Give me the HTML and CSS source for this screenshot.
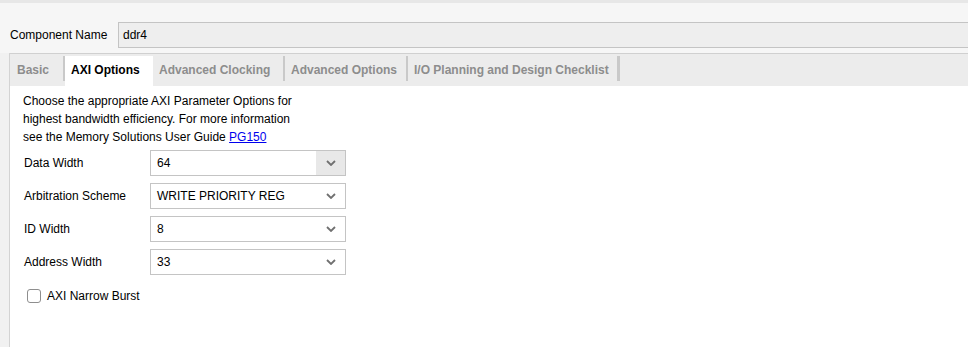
FILE: index.html
```html
<!DOCTYPE html>
<html>
<head>
<meta charset="utf-8">
<link rel="stylesheet" href="styles.css">
</head>
<body>
<div class="topband"></div>
<div class="header">
  <span class="name-label">Component Name</span>
  <div class="name-input">ddr4</div>
</div>
<div class="tabs-wrap">
  <div class="tabstrip">
    <div class="tab t-basic">Basic</div><span class="sep"></span>
    <div class="tab t-axi active">AXI Options</div>
    <div class="tab t-clock">Advanced Clocking</div><span class="sep"></span>
    <div class="tab t-adv">Advanced Options</div><span class="sep"></span>
    <div class="tab t-io">I/O Planning and Design Checklist</div><span class="sep wide"></span>
  </div>
  <div class="panel">
    <p class="desc">Choose the appropriate AXI Parameter Options for<br>highest bandwidth efficiency. For more information<br>see the Memory Solutions User Guide <a href="#">PG150</a></p>
    <div class="form">
      <span class="lbl">Data Width</span>
      <div class="select focus"><span class="val">64</span><span class="chev"><svg width="10" height="6" viewBox="0 0 10 6"><path d="M1 1 L5 5 L9 1" fill="none" stroke="#707070" stroke-width="1.8"/></svg></span></div>
      <span class="lbl">Arbitration Scheme</span>
      <div class="select"><span class="val">WRITE PRIORITY REG</span><span class="chev"><svg width="10" height="6" viewBox="0 0 10 6"><path d="M1 1 L5 5 L9 1" fill="none" stroke="#707070" stroke-width="1.8"/></svg></span></div>
      <span class="lbl">ID Width</span>
      <div class="select"><span class="val">8</span><span class="chev"><svg width="10" height="6" viewBox="0 0 10 6"><path d="M1 1 L5 5 L9 1" fill="none" stroke="#707070" stroke-width="1.8"/></svg></span></div>
      <span class="lbl">Address Width</span>
      <div class="select"><span class="val">33</span><span class="chev"><svg width="10" height="6" viewBox="0 0 10 6"><path d="M1 1 L5 5 L9 1" fill="none" stroke="#707070" stroke-width="1.8"/></svg></span></div>
    </div>
    <div class="check-row"><span class="checkbox"></span><span>AXI Narrow Burst</span></div>
  </div>
</div>
</body>
</html>
```
FILE: styles.css
```css
html, body {
  margin: 0;
  padding: 0;
}
body {
  width: 968px;
  height: 347px;
  overflow: hidden;
  background: #f1f1f1;
  font-family: "Liberation Sans", Arial, sans-serif;
  font-size: 12px;
  color: #000;
}
.topband {
  height: 3px;
  background: #e7e7e7;
}
.header {
  display: flex;
  align-items: center;
  background: #f6f6f6;
  padding: 19px 0 5px 10px;
}
.name-label {
  width: 108px;
  flex: none;
}
.name-input {
  flex: none;
  width: 880px;
  height: 24px;
  line-height: 24px;
  border: 1px solid #c4c4c4;
  border-right: none;
  background: #eeeeee;
  padding-left: 4px;
}
.tabs-wrap {
  margin-left: 9px;
  border-left: 1px solid #d3d3d3;
  height: 294px;
  display: flex;
  flex-direction: column;
}
.tabstrip {
  display: flex;
  align-items: flex-start;
  border-top: 1px solid #d0d0d0;
  background: #ececec;
  padding-top: 2px;
  height: 30px;
}
.tab {
  flex: none;
  height: 30px;
  box-sizing: border-box;
  padding: 0 0 3px 6px;
  display: flex;
  align-items: center;
  font-weight: bold;
  color: #8d8d8d;
  white-space: nowrap;
  overflow: hidden;
}
.t-basic { width: 53px; padding-left: 7px; }
.t-axi { width: 88px; }
.t-clock { width: 130px; }
.t-adv { width: 121px; }
.t-io { width: 209px; }
.tab.active {
  background: #fff;
  color: #000;
}
.sep {
  width: 2px;
  height: 25px;
  background: #c9c9c9;
  flex: none;
}
.sep.wide {
  width: 3px;
}
.panel {
  flex: 1;
  background: #fff;
  padding: 6px 0 0 13px;
}
.desc {
  margin: 0;
  line-height: 18px;
}
.desc a {
  color: #0000ee;
  text-decoration: underline;
}
.form {
  display: grid;
  grid-template-columns: 126px 196px;
  row-gap: 7px;
  align-items: center;
  margin: 4px 0 0 1px;
}
.select {
  height: 24px;
  border: 1px solid #c4c4c4;
  background: #fff;
  display: flex;
  align-items: center;
  padding-left: 6px;
}
.chev {
  margin-left: auto;
  width: 29px;
  height: 24px;
  display: flex;
  align-items: center;
  justify-content: center;
}
.select.focus .chev {
  background: #e8e8e8;
}
.check-row {
  display: flex;
  align-items: center;
  gap: 6px;
  margin: 14px 0 0 4px;
}
.checkbox {
  width: 12px;
  height: 12px;
  border: 1px solid #8e8e8e;
  border-radius: 3px;
  background: #fff;
}
```
